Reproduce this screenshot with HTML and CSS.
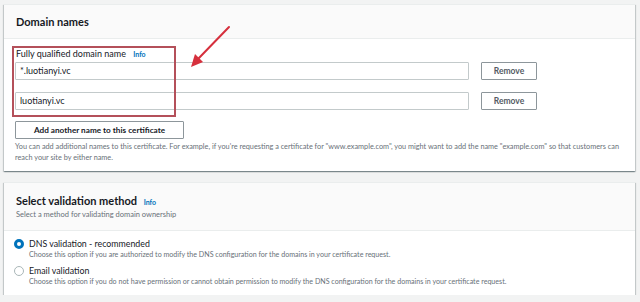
FILE: index.html
```html
<!DOCTYPE html>
<html lang="en">
<head>
<meta charset="utf-8">
<title>Request certificate</title>
<link rel="stylesheet" href="styles.css">
</head>
<body>
<section class="card">
  <header class="card-header">
    <h2 class="title">Domain names</h2>
  </header>
  <div class="card-body domains">
    <div class="field-label">Fully qualified domain name <a class="info">Info</a></div>
    <div class="name-row">
      <div class="input">*.luotianyi.vc</div>
      <button class="btn">Remove</button>
    </div>
    <div class="name-row">
      <div class="input">luotianyi.vc</div>
      <button class="btn">Remove</button>
    </div>
    <button class="btn add-btn">Add another name to this certificate</button>
    <p class="help">You can add additional names to this certificate. For example, if you're requesting a certificate for "www.example.com", you might want to add the name "example.com" so that customers can reach your site by either name.</p>
    <div class="highlight"></div>
    <svg class="arrow" width="50" height="50" viewBox="0 0 50 50">
      <path d="M42 4 L11 36" stroke="#d6303d" stroke-width="2" stroke-linecap="round" fill="none"/>
      <path d="M4 44 L8 31 L16 39 Z" fill="#d6303d"/>
    </svg>
  </div>
</section>

<section class="card">
  <header class="card-header tall">
    <h2 class="title big">Select validation method <a class="info">Info</a></h2>
    <p class="subtitle">Select a method for validating domain ownership</p>
  </header>
  <div class="card-body radios">
    <div class="radio-row">
      <span class="radio checked"></span>
      <div>
        <div class="radio-label">DNS validation - recommended</div>
        <div class="radio-desc">Choose this option if you are authorized to modify the DNS configuration for the domains in your certificate request.</div>
      </div>
    </div>
    <div class="radio-row">
      <span class="radio"></span>
      <div>
        <div class="radio-label">Email validation</div>
        <div class="radio-desc">Choose this option if you do not have permission or cannot obtain permission to modify the DNS configuration for the domains in your certificate request.</div>
      </div>
    </div>
  </div>
</section>
</body>
</html>
```

FILE: styles.css
```css
* { box-sizing: border-box; }
html, body { margin: 0; }
body {
  background: #f2f3f3;
  padding: 4px 5px 0 4px;
  font-family: "Lato", "Open Sans", sans-serif;
  color: #16191f;
  display: flex;
  flex-direction: column;
  gap: 11px;
}
.card {
  background: #fff;
  border-top: 1px solid #eaeded;
  box-shadow: 0 1px 1px 0 rgba(0,28,36,.3), 1px 1px 1px 0 rgba(0,28,36,.15), -1px 1px 1px 0 rgba(0,28,36,.15);
}
.card-header {
  background: #fafafa;
  border-bottom: 1px solid #eaeded;
  height: 34px;
  padding: 0 12px;
  display: flex;
  flex-direction: column;
  justify-content: center;
}
.card-header.tall { height: 48px; padding-top: 0; }
.title {
  margin: 0;
  font-size: 11px;
  font-weight: 700;
  line-height: 14px;
}
.title.big { font-size: 11px; line-height: 14px; }
.info {
  color: #0073bb;
  font-size: 7px;
  font-weight: 700;
  margin-left: 4px;
}
.subtitle {
  margin: 1px 0 0;
  font-size: 7.5px;
  color: #687078;
  line-height: 10px;
}
.card-body { position: relative; }
.domains { padding: 8px 11px 8px 11px; }
.field-label {
  font-size: 9px;
  line-height: 14px;
  padding-left: 1px;
}
.field-label .info { margin-left: 5px; }
.name-row {
  display: flex;
  align-items: center;
  gap: 12px;
  margin-bottom: 12px;
}
.field-label + .name-row { margin-top: 1px; }
.input {
  width: 454px;
  height: 18px;
  border: 1px solid #c3cacb;
  border-radius: 1px;
  padding: 0 4px;
  font-size: 9px;
  line-height: 16px;
}
.btn {
  font-family: inherit;
  background: #fff;
  border: 1px solid #8d969b;
  border-radius: 1px;
  color: #545b64;
  font-weight: 700;
  font-size: 8.5px;
  height: 18px;
  padding: 0;
  width: 56px;
}
.add-btn {
  display: block;
  width: 169px;
  color: #16191f;
  font-size: 8.2px;
  margin-top: -1px;
}
.help {
  margin: 2px 0 0;
  font-size: 7.3px;
  line-height: 11px;
  color: #687078;
}
.highlight {
  position: absolute;
  left: 8px;
  top: 7px;
  width: 164px;
  height: 71px;
  border: 2px solid #b4505a;
}
.arrow {
  position: absolute;
  left: 183px;
  top: -16px;
}
.radios {
  padding: 7px 12px 8px 10px;
  display: flex;
  flex-direction: column;
  gap: 5px;
}
.radio-row {
  display: flex;
  gap: 5px;
  align-items: flex-start;
}
.radio {
  flex: none;
  width: 10px;
  height: 10px;
  margin-top: 1px;
  border-radius: 50%;
  border: 1px solid #aab7b8;
  background: #fff;
}
.radio.checked {
  border: 3px solid #0073bb;
  background: #fff;
}
.radio-label {
  font-size: 8.8px;
  line-height: 12px;
}
.radio-desc {
  font-size: 7.1px;
  line-height: 10px;
  color: #687078;
}
```
